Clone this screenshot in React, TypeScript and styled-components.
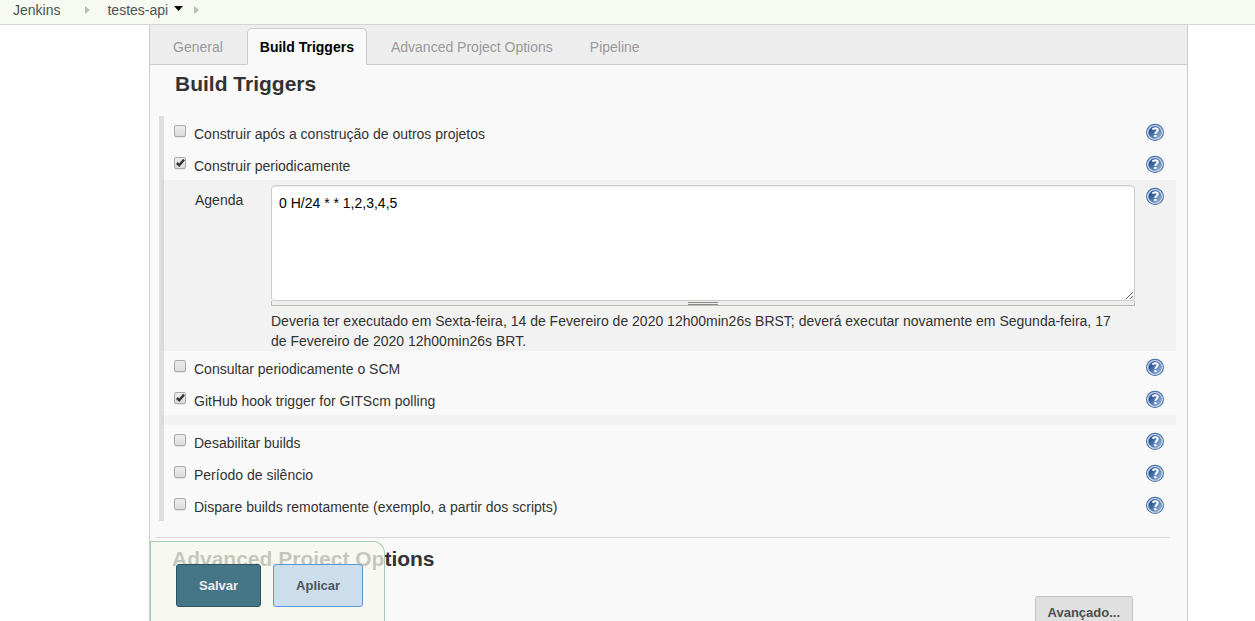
import React, { useState } from "react";
import styled, { createGlobalStyle, css } from "styled-components";

const GlobalStyle = createGlobalStyle`
  *, *::before, *::after { box-sizing: border-box; }
  body {
    margin: 0;
    background: #fff;
    color: #333;
    font-family: "Liberation Sans", Arial, sans-serif;
    font-size: 14px;
    line-height: 20px;
  }
  button, input, textarea { font-family: inherit; }
`;

const Page = styled.div`
  height: 100vh;
  overflow: hidden;
  display: flex;
  flex-direction: column;
`;

const Breadcrumbs = styled.nav`
  flex: none;
  display: flex;
  align-items: center;
  padding: 0 13px 4px;
  background: #f6faf2;
  border-bottom: 1px solid #d3d7cf;
`;

const Crumb = styled.a`
  color: #4d5454;
  text-decoration: none;
`;

const Separator = styled.svg`
  width: 5px;
  height: 8px;
  margin: 0 17px 0 25px;
  fill: #b9bdb6;
`;

const EndSeparator = styled(Separator)`
  margin: 0 0 0 11px;
`;

const MenuButton = styled.button`
  display: flex;
  padding: 0;
  margin: 0 0 3px 6px;
  border: 0;
  background: none;
  svg { width: 9px; height: 5px; }
`;

const Panel = styled.main`
  flex: 1;
  min-height: 0;
  overflow: hidden;
  position: relative;
  margin: 0 67px 0 149px;
  background: #f9f9f9;
  border: solid #ccc;
  border-width: 0 1px;
`;

const Tabs = styled.div`
  display: flex;
  align-items: flex-end;
  height: 40px;
  padding-left: 10px;
  background: #ededed;
  border-bottom: 1px solid #ccc;
`;

const Tab = styled.button<{ $active?: boolean }>`
  height: 37px;
  padding: 0 12px;
  margin-bottom: -1px;
  border: 1px solid transparent;
  border-radius: 5px 5px 0 0;
  background: none;
  color: #999;
  font-size: 14px;
  line-height: 20px;
  & + & { margin-left: 11px; }
  ${({ $active }) =>
    $active &&
    css`
      color: #000;
      font-weight: bold;
      background: #f9f9f9;
      border-color: #ccc #ccc #f9f9f9;
    `}
`;

const Heading = styled.h2`
  margin: 0;
  padding: 6px 25px 0;
  font-size: 21px;
  line-height: 26px;
  color: #333;
`;

const LowerHeading = styled(Heading)`
  padding: 8px 22px 0;
`;

const Options = styled.form`
  position: relative;
  margin: 19px 11px 16px 9px;
  &::before {
    content: "";
    position: absolute;
    z-index: 1;
    inset: 0 auto 0 0;
    width: 5px;
    background: rgba(0, 0, 0, 0.1);
  }
`;

const OptionRow = styled.div`
  display: flex;
  align-items: flex-start;
  height: 32px;
  padding: 7px 12px 0 15px;
`;

const OptionLabel = styled.label`
  flex: 1;
  display: flex;
  gap: 8px;
  padding-top: 1px;
`;

const OptionText = styled.span`
  line-height: 20px;
`;

const Checkbox = styled.input`
  appearance: none;
  flex: none;
  width: 12px;
  height: 12px;
  margin: 1px 0 0;
  border: 1px solid #a9a9a9;
  border-radius: 2px;
  background: linear-gradient(#ececec, #dcdcdc);
  box-shadow: 0 1px 0 rgba(0, 0, 0, 0.08);
`;

const CheckSlot = styled.span`
  position: relative;
  display: flex;
  height: 14px;
`;

const CheckMark = styled.svg`
  position: absolute;
  left: 1px;
  top: 1px;
  width: 11px;
  height: 11px;
  pointer-events: none;
  fill: none;
  stroke: #383838;
  stroke-width: 2.4;
`;

const HelpButton = styled.button`
  flex: none;
  display: flex;
  width: 18px;
  height: 18px;
  padding: 0;
  border: 0;
  background: none;
`;

const Agenda = styled.div`
  display: flex;
  align-items: flex-start;
  margin-left: 2px;
  padding: 5px 12px 0 34px;
  background: #f2f2f2;
`;

const AgendaLabel = styled.label`
  flex: none;
  width: 76px;
  padding-top: 5px;
`;

const AgendaField = styled.div`
  flex: 1;
  min-width: 0;
`;

const AgendaText = styled.textarea`
  display: block;
  width: 100%;
  height: 116px;
  padding: 7px;
  border: 1px solid #ccc;
  border-radius: 4px 4px 3px 3px;
  background: #fff;
  box-shadow: inset 0 1px 1px rgba(0, 0, 0, 0.08);
  color: #000;
  font-size: 14px;
  line-height: 20px;
  resize: vertical;
  outline: 0;
`;

const Grip = styled.div`
  display: flex;
  justify-content: center;
  height: 5px;
  padding-top: 1px;
  border: solid #babdb6;
  border-width: 0 1px 1px;
  background: #eeeeec;
  &::before {
    content: "";
    width: 30px;
    height: 3px;
    border: solid #888a85;
    border-width: 1px 0;
  }
`;

const AgendaHint = styled.p`
  margin: 5px 0 0;
  padding-right: 16px;
`;

const AgendaHelp = styled.div`
  margin: 2px 0 0 11px;
`;

const Band = styled.div`
  height: 10px;
  margin-left: 2px;
  background: #f2f2f2;
`;

const Rule = styled.hr`
  margin: 0 17px 0 5px;
  border: 0;
  border-top: 1px solid #d8d8d8;
`;

const AdvancedRow = styled.div`
  display: flex;
  justify-content: flex-end;
  padding: 24px 54px 0;
`;

const Button = styled.button<{ $kind?: "primary" | "secondary" }>`
  height: 32px;
  padding: 0 12px;
  border: 1px solid #c3c3c3;
  border-radius: 3px;
  background: #e0e0e0;
  color: #4d4d4d;
  font-size: 13px;
  font-weight: bold;
  ${({ $kind }) =>
    $kind &&
    css`
      height: 43px;
      padding: 0 22px;
      color: #4d545d;
      background: #ccddec;
      border-color: #5c97d3;
    `}
  ${({ $kind }) =>
    $kind === "primary" &&
    css`
      color: #eee;
      background: #457687;
      border-color: #2c545e;
    `}
`;

const SaveBar = styled.div`
  position: absolute;
  left: 0;
  bottom: 0;
  z-index: 2;
  display: flex;
  gap: 12px;
  padding: 22px 21px 14px 25px;
  background: rgba(246, 248, 238, 0.75);
  border: solid #a5cdb2;
  border-width: 1px 1px 0;
  border-radius: 0 12px 0 0;
`;

function Arrow() {
  return <path d="M0 0L5 4L0 8Z" />;
}

function Help({ topic }: { topic: string }) {
  return (
    <HelpButton type="button" aria-label={`Ajuda: ${topic}`}>
      <svg width="18" height="18" viewBox="0 0 18 18">
        <defs>
          <linearGradient id="helpFill" x1="0" y1="0.1" x2="1" y2="0.9">
            <stop offset="0.25" stopColor="#2d5796" />
            <stop offset="1" stopColor="#9dbde0" />
          </linearGradient>
        </defs>
        <ellipse cx="9" cy="9.4" rx="8.4" ry="8" fill="#dfe9f5" stroke="#4a70aa" strokeWidth="1.1" />
        <ellipse cx="9" cy="9.4" rx="6.6" ry="6.3" fill="url(#helpFill)" stroke="#7d9fcc" strokeWidth="0.7" />
        <path d="M6.5 6.7C7.3 4.8 11.7 4.5 11.7 7.1C11.7 8.8 9.4 8.7 9.4 10.9" fill="none" stroke="#fff" strokeWidth="2.1" />
        <rect x="8.2" y="12" width="2.3" height="2.1" fill="#fff" />
      </svg>
    </HelpButton>
  );
}

function Option({ label, initial = false }: { label: string; initial?: boolean }) {
  const [checked, setChecked] = useState(initial);
  return (
    <OptionRow>
      <OptionLabel>
        <CheckSlot>
          <Checkbox type="checkbox" checked={checked} onChange={() => setChecked(!checked)} />
          {checked && (
            <CheckMark viewBox="0 0 11 11">
              <path d="M1.8 6L4.2 8.2L9 2.6" />
            </CheckMark>
          )}
        </CheckSlot>
        <OptionText>{label}</OptionText>
      </OptionLabel>
      <Help topic={label} />
    </OptionRow>
  );
}

export default function App() {
  const [agenda, setAgenda] = useState("0 H/24 * * 1,2,3,4,5");
  return (
    <Page>
      <GlobalStyle />
      <Breadcrumbs>
        <Crumb href="#jenkins">Jenkins</Crumb>
        <Separator viewBox="0 0 5 8"><Arrow /></Separator>
        <Crumb href="#testes-api">testes-api</Crumb>
        <MenuButton type="button" aria-label="Menu">
          <svg viewBox="0 0 9 5"><path d="M0 0H9L4.5 5Z" /></svg>
        </MenuButton>
        <EndSeparator viewBox="0 0 5 8"><Arrow /></EndSeparator>
      </Breadcrumbs>
      <Panel>
        <Tabs role="tablist">
          <Tab role="tab">General</Tab>
          <Tab role="tab" aria-selected $active>Build Triggers</Tab>
          <Tab role="tab">Advanced Project Options</Tab>
          <Tab role="tab">Pipeline</Tab>
        </Tabs>
        <Heading>Build Triggers</Heading>
        <Options>
          <Option label="Construir após a construção de outros projetos" />
          <Option label="Construir periodicamente" initial />
          <Agenda>
            <AgendaLabel htmlFor="agenda">Agenda</AgendaLabel>
            <AgendaField>
              <AgendaText
                id="agenda"
                spellCheck={false}
                value={agenda}
                onChange={(e) => setAgenda(e.target.value)}
              />
              <Grip />
              <AgendaHint>
                Deveria ter executado em Sexta-feira, 14 de Fevereiro de 2020 12h00min26s BRST; deverá
                executar novamente em Segunda-feira, 17 de Fevereiro de 2020 12h00min26s BRT.
              </AgendaHint>
            </AgendaField>
            <AgendaHelp><Help topic="Agenda" /></AgendaHelp>
          </Agenda>
          <Option label="Consultar periodicamente o SCM" />
          <Option label="GitHub hook trigger for GITScm polling" initial />
          <Band />
          <Option label="Desabilitar builds" />
          <Option label="Período de silêncio" />
          <Option label="Dispare builds remotamente (exemplo, a partir dos scripts)" />
        </Options>
        <Rule />
        <LowerHeading>Advanced Project Options</LowerHeading>
        <AdvancedRow>
          <Button type="button">Avançado...</Button>
        </AdvancedRow>
        <SaveBar>
          <Button type="submit" $kind="primary">Salvar</Button>
          <Button type="button" $kind="secondary">Aplicar</Button>
        </SaveBar>
      </Panel>
    </Page>
  );
}
